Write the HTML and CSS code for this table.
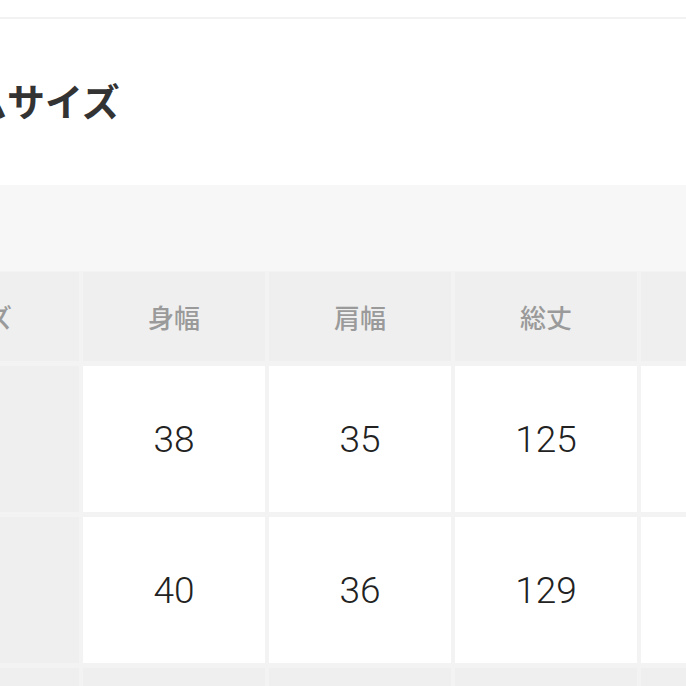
FILE: index.html
```html
<!DOCTYPE html>
<html lang="ja">
<head>
<meta charset="utf-8">
<link rel="stylesheet" href="styles.css">
</head>
<body>
<div class="page">
  <div class="topbar"></div>
  <div class="title-area">
    <h2 class="title">ムサイズ</h2>
  </div>
  <div class="band"></div>
  <div class="table-wrap">
    <div class="grid">
      <div class="cell head first"><span class="first-label">サイズ</span></div>
      <div class="cell head">身幅</div>
      <div class="cell head">肩幅</div>
      <div class="cell head">総丈</div>
      <div class="cell head"></div>

      <div class="cell first"></div>
      <div class="cell data">38</div>
      <div class="cell data">35</div>
      <div class="cell data">125</div>
      <div class="cell data"></div>

      <div class="cell first"></div>
      <div class="cell data">40</div>
      <div class="cell data">36</div>
      <div class="cell data">129</div>
      <div class="cell data"></div>

      <div class="cell first"></div>
      <div class="cell head"></div>
      <div class="cell head"></div>
      <div class="cell head"></div>
      <div class="cell head"></div>
    </div>
  </div>
</div>
</body>
</html>
```
FILE: styles.css
```css
html, body {
  margin: 0;
  padding: 0;
  background: #ffffff;
}

.page {
  width: 686px;
  height: 686px;
  overflow: hidden;
  font-family: "Noto Sans CJK JP", "Noto Sans", sans-serif;
}

.topbar {
  height: 17px;
  border-bottom: 2px solid #f2f2f2;
  background: #ffffff;
}

.title-area {
  height: 166px;
  display: flex;
  align-items: center;
  padding-bottom: 0;
  box-sizing: border-box;
}

.title {
  margin: -4px 0 0 -31px;
  font-size: 38px;
  font-weight: 700;
  color: #333333;
  line-height: 1;
  letter-spacing: 0;
}

.band {
  height: 86px;
  background: #f7f7f7;
}

.table-wrap {
  background: #f3f3f3;
  padding-top: 1px;
  height: 420px;
}

.grid {
  display: grid;
  grid-template-columns: 79px repeat(4, 182px);
  grid-template-rows: 89px 146px 146px 146px;
  column-gap: 4px;
  row-gap: 5px;
  width: 900px;
}

.cell {
  display: flex;
  align-items: center;
  justify-content: center;
}

.head {
  background: #efefef;
  color: #9a9a9a;
  font-size: 26px;
  font-weight: 500;
}

.first {
  background: #efefef;
  justify-content: flex-end;
  overflow: hidden;
}

.first-label {
  color: #9a9a9a;
  font-size: 26px;
  font-weight: 500;
  margin-right: 67px;
  white-space: nowrap;
}

.data {
  background: #ffffff;
  color: #222222;
  font-family: Roboto, "Noto Sans", sans-serif;
  font-size: 37px;
  font-weight: 300;
}
```
